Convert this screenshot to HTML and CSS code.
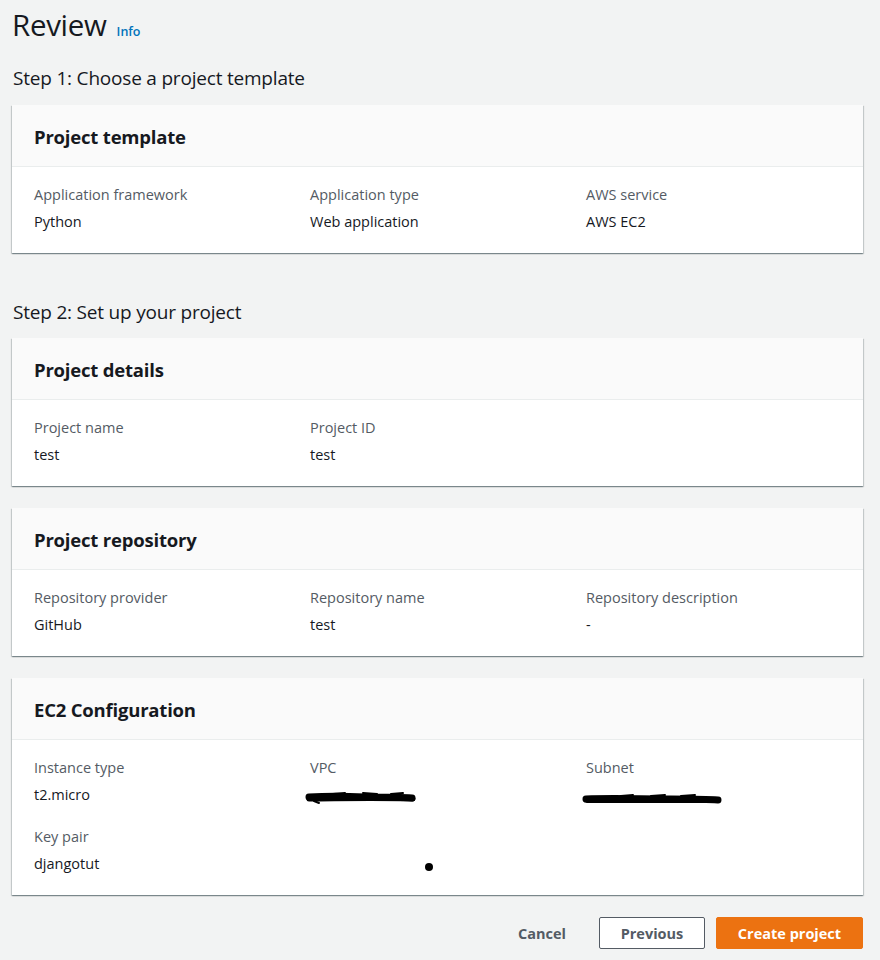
FILE: index.html
```html
<!DOCTYPE html>
<html>
<head>
<meta charset="utf-8">
<link rel="stylesheet" href="styles.css">
</head>
<body>
<div class="page">
  <div class="title-row">
    <h1 class="title">Review</h1>
    <a class="info">Info</a>
  </div>

  <h2 class="step">Step 1: Choose a project template</h2>
  <section class="card">
    <div class="card-head">Project template</div>
    <div class="card-body">
      <div class="kv"><div class="label">Application framework</div><div class="value">Python</div></div>
      <div class="kv"><div class="label">Application type</div><div class="value">Web application</div></div>
      <div class="kv"><div class="label">AWS service</div><div class="value">AWS EC2</div></div>
    </div>
  </section>

  <h2 class="step step2">Step 2: Set up your project</h2>
  <section class="card">
    <div class="card-head">Project details</div>
    <div class="card-body">
      <div class="kv"><div class="label">Project name</div><div class="value">test</div></div>
      <div class="kv"><div class="label">Project ID</div><div class="value">test</div></div>
    </div>
  </section>

  <section class="card">
    <div class="card-head">Project repository</div>
    <div class="card-body">
      <div class="kv"><div class="label">Repository provider</div><div class="value">GitHub</div></div>
      <div class="kv"><div class="label">Repository name</div><div class="value">test</div></div>
      <div class="kv"><div class="label">Repository description</div><div class="value">-</div></div>
    </div>
  </section>

  <section class="card">
    <div class="card-head">EC2 Configuration</div>
    <div class="card-body">
      <div class="kv"><div class="label">Instance type</div><div class="value">t2.micro</div></div>
      <div class="kv"><div class="label">VPC</div><div class="value"><svg class="scribble" width="112" height="16" viewBox="0 0 112 16"><path d="M4 7 C20 6 40 6 60 7 C80 7 95 7 107 8" stroke="#000" stroke-width="7" stroke-linecap="round" fill="none"/><path d="M4 9 C30 9 60 8 108 9" stroke="#000" stroke-width="5" stroke-linecap="round" fill="none"/><path d="M9 11 L14 13 M28 4 L40 3 M58 3 L72 4 M86 4 L98 3" stroke="#000" stroke-width="2" stroke-linecap="round" fill="none"/></svg></div></div>
      <div class="kv"><div class="label">Subnet</div><div class="value"><svg class="scribble sub" width="142" height="16" viewBox="0 0 142 16"><path d="M5 8 C30 7 60 8 90 8 C110 8 125 8 137 9" stroke="#000" stroke-width="7" stroke-linecap="round" fill="none"/><path d="M6 10 C40 10 90 10 137 10" stroke="#000" stroke-width="4" stroke-linecap="round" fill="none"/><path d="M40 5 L52 4 M70 5 L84 4 M100 5 L114 4" stroke="#000" stroke-width="2" stroke-linecap="round" fill="none"/></svg></div></div>
      <div class="kv"><div class="label">Key pair</div><div class="value">djangotut</div></div>
      <div class="kv dot-cell"><span class="dot"></span></div>
    </div>
  </section>

  <div class="actions">
    <button class="btn btn-link">Cancel</button>
    <button class="btn btn-normal">Previous</button>
    <button class="btn btn-primary">Create project</button>
  </div>
</div>
</body>
</html>
```

FILE: styles.css
```css
* { box-sizing: border-box; }
html, body { margin: 0; padding: 0; }
body {
  background: #f2f3f3;
  font-family: "Open Sans", "Noto Sans", Arial, sans-serif;
  color: #16191f;
  width: 880px;
  height: 960px;
  overflow: hidden;
}
.page {
  padding: 0 17px 0 12px;
}
.title-row {
  display: flex;
  align-items: baseline;
  gap: 10px;
  padding-top: 5px;
  height: 56px;
}
.title {
  margin: 0;
  font-size: 29.5px;
  font-weight: 400;
  line-height: 40px;
  letter-spacing: -0.3px;
}
.info {
  font-size: 12.5px;
  font-weight: 600;
  color: #0073bb;
}
.step {
  margin: 9px 0 14px 1px;
  font-size: 19px;
  font-weight: 400;
  line-height: 26px;
  letter-spacing: -0.2px;
}
.step2 { margin-top: 46px; margin-bottom: 13px; }
.card {
  background: #fff;
  box-shadow: 0 1px 1px 0 rgba(0,28,36,.3), 1px 1px 1px 0 rgba(0,28,36,.15), -1px 1px 1px 0 rgba(0,28,36,.15);
  margin-bottom: 22px;
}
.card-head {
  background: #fafafa;
  border-bottom: 1px solid #eaeded;
  padding: 19px 22px 16px;
  font-size: 18.5px;
  font-weight: 700;
  line-height: 26px;
  letter-spacing: -0.2px;
}
.card-body {
  display: grid;
  grid-template-columns: 276px 276px 1fr;
  row-gap: 20px;
  padding: 17px 22px 20px;
}
.label {
  font-size: 14.5px;
  line-height: 22px;
  color: #545b64;
}
.value {
  font-size: 14.5px;
  line-height: 22px;
  margin-top: 5px;
  height: 22px;
  overflow: visible;
}
.scribble {
  display: block;
  margin: 0 0 0 -5px;
  transform: translateY(6px);
}
.scribble.sub { transform: translateY(7px); }
.dot-cell {
  position: relative;
}
.dot {
  position: absolute;
  left: 115px;
  top: 37px;
  width: 8px;
  height: 8px;
  border-radius: 50%;
  background: #000;
}
.actions {
  display: flex;
  justify-content: flex-end;
  align-items: center;
  gap: 11px;
}
.btn {
  font-family: inherit;
  font-size: 14.5px;
  font-weight: 700;
  height: 32px;
  border-radius: 2px;
  padding: 0 20px;
  cursor: pointer;
  letter-spacing: 0;
}
.btn-link {
  background: transparent;
  border: 1px solid transparent;
  color: #545b64;
  margin-right: 1px;
}
.btn-normal {
  background: #fff;
  border: 1px solid #545b64;
  color: #545b64;
  width: 106px;
}
.btn-primary {
  background: #ec7211;
  border: 1px solid #ec7211;
  color: #fff;
  width: 147px;
}
```
